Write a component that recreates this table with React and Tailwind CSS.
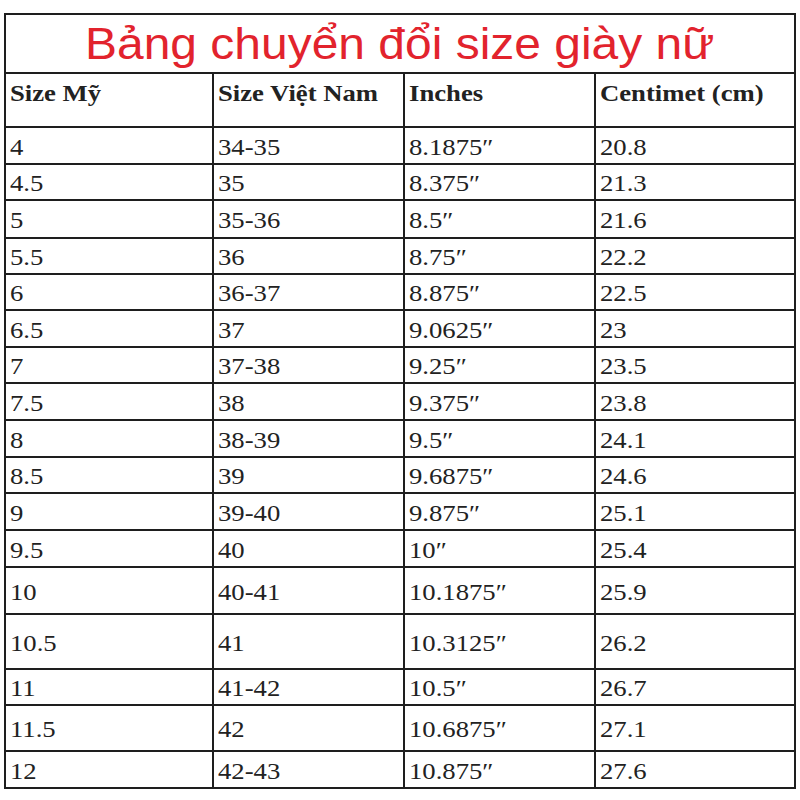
import React from "react";

const rows = [
  { us: "4", vn: "34-35", inch: "8.1875″", cm: "20.8", h: "h-[37px]" },
  { us: "4.5", vn: "35", inch: "8.375″", cm: "21.3", h: "h-[36px]" },
  { us: "5", vn: "35-36", inch: "8.5″", cm: "21.6", h: "h-[38px]" },
  { us: "5.5", vn: "36", inch: "8.75″", cm: "22.2", h: "h-[36px]" },
  { us: "6", vn: "36-37", inch: "8.875″", cm: "22.5", h: "h-[36px]" },
  { us: "6.5", vn: "37", inch: "9.0625″", cm: "23", h: "h-[37px]" },
  { us: "7", vn: "37-38", inch: "9.25″", cm: "23.5", h: "h-[36px]" },
  { us: "7.5", vn: "38", inch: "9.375″", cm: "23.8", h: "h-[37px]" },
  { us: "8", vn: "38-39", inch: "9.5″", cm: "24.1", h: "h-[37px]" },
  { us: "8.5", vn: "39", inch: "9.6875″", cm: "24.6", h: "h-[36px]" },
  { us: "9", vn: "39-40", inch: "9.875″", cm: "25.1", h: "h-[37px]" },
  { us: "9.5", vn: "40", inch: "10″", cm: "25.4", h: "h-[37px]" },
  { us: "10", vn: "40-41", inch: "10.1875″", cm: "25.9", h: "h-[47px]" },
  { us: "10.5", vn: "41", inch: "10.3125″", cm: "26.2", h: "h-[55px]" },
  { us: "11", vn: "41-42", inch: "10.5″", cm: "26.7", h: "h-[36px]" },
  { us: "11.5", vn: "42", inch: "10.6875″", cm: "27.1", h: "h-[46px]" },
  { us: "12", vn: "42-43", inch: "10.875″", cm: "27.6", h: "h-[37px]" },
];

const cell = "border-2 border-[#1e1e1e] pl-[4px] pt-[3px] align-middle";
const txt = "inline-block origin-left scale-x-[1.16]";

const Cell = ({ children }) => (
  <td className={cell}>
    <span className={txt}>{children}</span>
  </td>
);

const App = () => {
  return (
    <div className="w-[800px] h-[800px] bg-white pt-[13px] pl-[4px]">
      <table className="table-fixed border-collapse w-[790px] font-['Liberation_Serif',serif] text-[23px] leading-none text-[#222]">
        <colgroup>
          <col className="w-[208px]" />
          <col className="w-[191px]" />
          <col className="w-[191px]" />
          <col className="w-[200px]" />
        </colgroup>
        <tbody>
          <tr className="h-[59px]">
            <td colSpan={4} className="border-2 border-[#1e1e1e] text-center align-middle pt-[1px]">
              <span className="inline-block origin-center scale-x-[1.09] font-['Liberation_Sans',Arial,sans-serif] text-[44px] leading-none text-[#e2232d]">
                Bảng chuyển đổi size giày nữ
              </span>
            </td>
          </tr>
          <tr className="h-[54px]">
            {["Size Mỹ", "Size Việt Nam", "Inches", "Centimet (cm)"].map((t) => (
              <td key={t} className="border-2 border-[#1e1e1e] pl-[4px] pt-[8px] align-top font-bold">
                <span className={txt}>{t}</span>
              </td>
            ))}
          </tr>
          {rows.map((r) => (
            <tr key={r.us} className={r.h}>
              <Cell>{r.us}</Cell>
              <Cell>{r.vn}</Cell>
              <Cell>{r.inch}</Cell>
              <Cell>{r.cm}</Cell>
            </tr>
          ))}
        </tbody>
      </table>
    </div>
  );
};

export default App;
